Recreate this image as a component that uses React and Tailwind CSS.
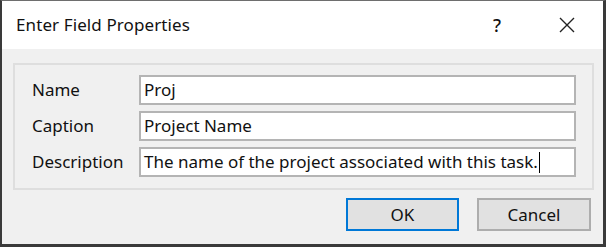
export default function App() {
  const fields = [
    { label: 'Name', value: 'Proj' },
    { label: 'Caption', value: 'Project Name' },
    { label: 'Description', value: 'The name of the project associated with this task.', caret: true },
  ]

  return (
    <div className="w-[606px] h-[247px] bg-[#f0f0f0] border-l-2 border-t border-r-[3px] border-b-[3px] border-[#3a3a3a] border-t-[#6e6e6e] flex flex-col text-[#111] font-['Noto_Sans',sans-serif]">
      <div className="h-[48px] bg-white flex items-center shrink-0">
        <span className="ml-[14px] text-[17px] tracking-[0.1px]">Enter Field Properties</span>
        <span className="ml-auto mr-[58px] text-[18px] font-medium">?</span>
        <svg width="16" height="16" viewBox="0 0 16 16" className="mr-[28px]">
          <path d="M1 1L15 15M15 1L1 15" stroke="#222" strokeWidth="1.4" />
        </svg>
      </div>

      <div className="flex-1 flex flex-col">
        <div className="mt-[14px] ml-[11px] w-[581px] h-[127px] border-2 border-[#dedede] flex flex-col gap-[6px] pt-[10px] pl-[17px]">
          {fields.map((f) => (
            <div key={f.label} className="flex items-center">
              <span className="w-[107px] text-[17px]">{f.label}</span>
              <div className="w-[437px] h-[30px] bg-white border-2 border-[#b4b4b4] flex items-center pl-[3px] text-[17px]">
                {f.value}
                {f.caret && <span className="w-px h-[21px] bg-black ml-[1px]" />}
              </div>
            </div>
          ))}
        </div>

        <div className="flex justify-end gap-[18px] mt-[8px] mr-[12px]">
          <button className="w-[113px] h-[33px] bg-[#e1e1e1] border-2 border-[#0078d7] text-[17px]">OK</button>
          <button className="w-[114px] h-[33px] bg-[#e1e1e1] border-2 border-[#adadad] text-[17px]">Cancel</button>
        </div>
      </div>
    </div>
  )
}
